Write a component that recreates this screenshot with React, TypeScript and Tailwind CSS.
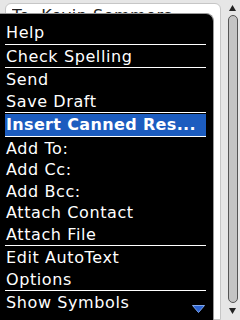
import React from "react";

type Entry = { label: string; selected?: boolean } | "sep";

const entries: Entry[] = [
  { label: "Help" },
  "sep",
  { label: "Check Spelling" },
  "sep",
  { label: "Send" },
  { label: "Save Draft" },
  "sep",
  { label: "Insert Canned Res...", selected: true },
  "sep",
  { label: "Add To:" },
  { label: "Add Cc:" },
  { label: "Add Bcc:" },
  { label: "Attach Contact" },
  { label: "Attach File" },
  "sep",
  { label: "Edit AutoText" },
  { label: "Options" },
  "sep",
  { label: "Show Symbols" },
];

export default function App() {
  return (
    <div
      className="relative w-[240px] h-[320px] overflow-hidden bg-[#e6e6e6] flex"
      style={{ fontFamily: '"DejaVu Sans", sans-serif' }}
    >
      {/* Compose screen behind the menu */}
      <div className="flex-1 pl-[5px] pr-[6px] pt-[3px]">
        <div className="h-full rounded-t-[6px] border border-[#c6c6c6] bg-white px-[6px] pt-[2px]">
          <div className="h-[7px] overflow-hidden">
            <p className="text-[16px] leading-[20px] text-[#222] tracking-[0.5px] whitespace-nowrap">
              To: Kevin Sommers
            </p>
          </div>
        </div>
      </div>

      {/* Scrollbar */}
      <div className="w-[13px] flex flex-col items-center pt-[5px] pb-[6px] pr-[2px]">
        <svg width="7" height="6" viewBox="0 0 7 6">
          <path d="M3.5 0 L7 6 L0 6 Z" fill="#222" />
        </svg>
        <div className="mt-[4px] flex-1 w-[10px] rounded-full border border-[#555] bg-[#c4c4c4]" />
        <svg width="7" height="6" viewBox="0 0 7 6" className="mt-[5px]">
          <path d="M0 0 L7 0 L3.5 6 Z" fill="#222" />
        </svg>
      </div>

      {/* Menu */}
      <div className="absolute left-0 top-[13px] bottom-0 w-[214px] bg-black rounded-tr-[8px] border-r border-t border-[#9a9a9a] pt-[8px] pl-[5px] pr-[7px] text-white text-[16px] leading-[21.5px] tracking-[0.6px]">
        {entries.map((e, i) =>
          e === "sep" ? (
            <div key={i} className="h-[2px]">
              <div className="h-[1px] bg-white" />
            </div>
          ) : (
            <div
              key={i}
              className={`h-[21.5px] pl-[1px] whitespace-nowrap ${
                e.selected ? "bg-[#1c5cbf] font-bold tracking-[0.35px]" : ""
              }`}
            >
              {e.label}
            </div>
          )
        )}
        <svg
          width="13"
          height="8"
          viewBox="0 0 13 8"
          className="absolute right-[8px] bottom-[7px]"
        >
          <path d="M0.5 0.5 L12.5 0.5 L6.5 7.5 Z" fill="#2a62d2" stroke="#7fa6ea" strokeWidth="1" />
        </svg>
      </div>
    </div>
  );
}
